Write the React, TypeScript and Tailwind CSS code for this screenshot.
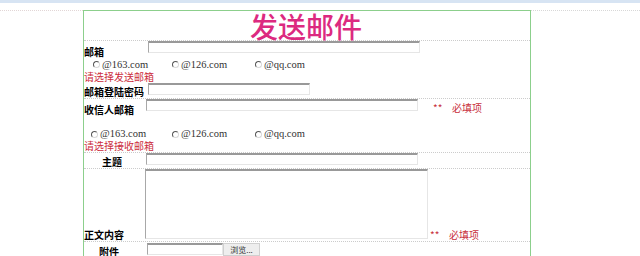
import React from "react";

const cjk = { fontFamily: '"Noto Sans CJK SC", "Noto Sans", sans-serif' };
const serif = { fontFamily: '"Liberation Serif", "Noto Sans CJK SC", serif' };

function Input({ w, h = 12 }: { w: number; h?: number }) {
  return (
    <div
      className="bg-white border-t-2 border-t-[#999999] border-l border-l-[#a8a8a8] border-r border-r-[#e6e6e6] border-b border-b-[#e6e6e6] shrink-0"
      style={{ width: w, height: h }}
    />
  );
}

function Radio({ label, w }: { label: string; w: number }) {
  return (
    <div className="flex items-center shrink-0" style={{ width: w }}>
      <span className="inline-block w-[7px] h-[7px] rounded-full border border-t-[#555] border-l-[#555] border-r-[#d8d8d8] border-b-[#d8d8d8] mr-[2px]" />
      <span className="text-[10.5px] leading-[12px] text-[#333]" style={serif}>
        {label}
      </span>
    </div>
  );
}

function Label({ children, className = "" }: { children: React.ReactNode; className?: string }) {
  return (
    <div className={"text-[10px] leading-[12px] font-bold text-black " + className} style={cjk}>
      {children}
    </div>
  );
}

function Required() {
  return (
    <div className="flex items-end text-[10px] leading-[12px] text-[#c8303c]" style={cjk}>
      <span className="w-[19px]">**</span>
      <span>必填项</span>
    </div>
  );
}

export default function App() {
  return (
    <div className="w-[640px] h-[256px] overflow-hidden bg-white">
      <div className="h-[3px] bg-[#d7e4f3]" />
      <div className="h-[7px]" />
      <div className="flex">
        <div className="w-[83px] border-t border-dotted border-[#e2d6d6]" />
        <div className="w-[448px] border-t border-l border-r border-[#8ccf8c] shrink-0">
          {/* title */}
          <div
            className="h-[30px] border-b border-dotted border-[#cccccc] flex justify-center items-center text-[28px] leading-[30px] font-medium text-[#dc2a80] pr-[2px]"
            style={cjk}
          >
            发送邮件
          </div>
          {/* 邮箱 */}
          <div className="h-[17px] flex">
            <Label className="w-[64px] self-end">邮箱</Label>
            <Input w={272} />
          </div>
          <div className="h-[13px] flex items-center pl-[9px]">
            <Radio label="@163.com" w={79} />
            <Radio label="@126.com" w={83} />
            <Radio label="@qq.com" w={83} />
          </div>
          <div className="h-[12px] text-[10px] leading-[12px] text-[#cc2c3c] flex items-end" style={cjk}>
            请选择发送邮箱
          </div>
          {/* 密码 */}
          <div className="h-[16px] flex border-b border-dotted border-[#cccccc]">
            <Label className="w-[64px] self-end">邮箱登陆密码</Label>
            <Input w={162} />
          </div>
          {/* 收信人 */}
          <div className="h-[26px] flex">
            <Label className="w-[62px] mt-[5px]">收信人邮箱</Label>
            <Input w={272} />
            <div className="ml-[15px] mt-[3px]">
              <Required />
            </div>
          </div>
          <div className="h-[15px] flex items-end pl-[7px]">
            <Radio label="@163.com" w={81} />
            <Radio label="@126.com" w={83} />
            <Radio label="@qq.com" w={83} />
          </div>
          <div
            className="h-[13px] border-b border-dotted border-[#cccccc] text-[10px] leading-[12px] text-[#cc2c3c]"
            style={cjk}
          >
            请选择接收邮箱
          </div>
          {/* 主题 */}
          <div className="h-[16px] flex border-b border-dotted border-[#cccccc]">
            <Label className="w-[62px] self-end pl-[18px]">主题</Label>
            <Input w={272} />
          </div>
          {/* 正文 */}
          <div className="h-[73px] flex border-b border-dotted border-[#cccccc]">
            <Label className="w-[61px] self-end">正文内容</Label>
            <Input w={283} h={70} />
            <div className="self-end ml-[2px]">
              <Required />
            </div>
          </div>
          {/* 附件 */}
          <div className="h-[20px] flex pt-[1px]">
            <Label className="w-[63px] pl-[15px] mt-[3px]">附件</Label>
            <Input w={76} />
            <div
              className="w-[37px] h-[13px] bg-[#eeeeee] border border-[#d0d0d0] text-[8px] leading-[11px] text-[#333] text-center"
              style={cjk}
            >
              浏览...
            </div>
          </div>
        </div>
        <div className="flex-1 border-t border-dotted border-[#d8d8d8]" />
      </div>
    </div>
  );
}
